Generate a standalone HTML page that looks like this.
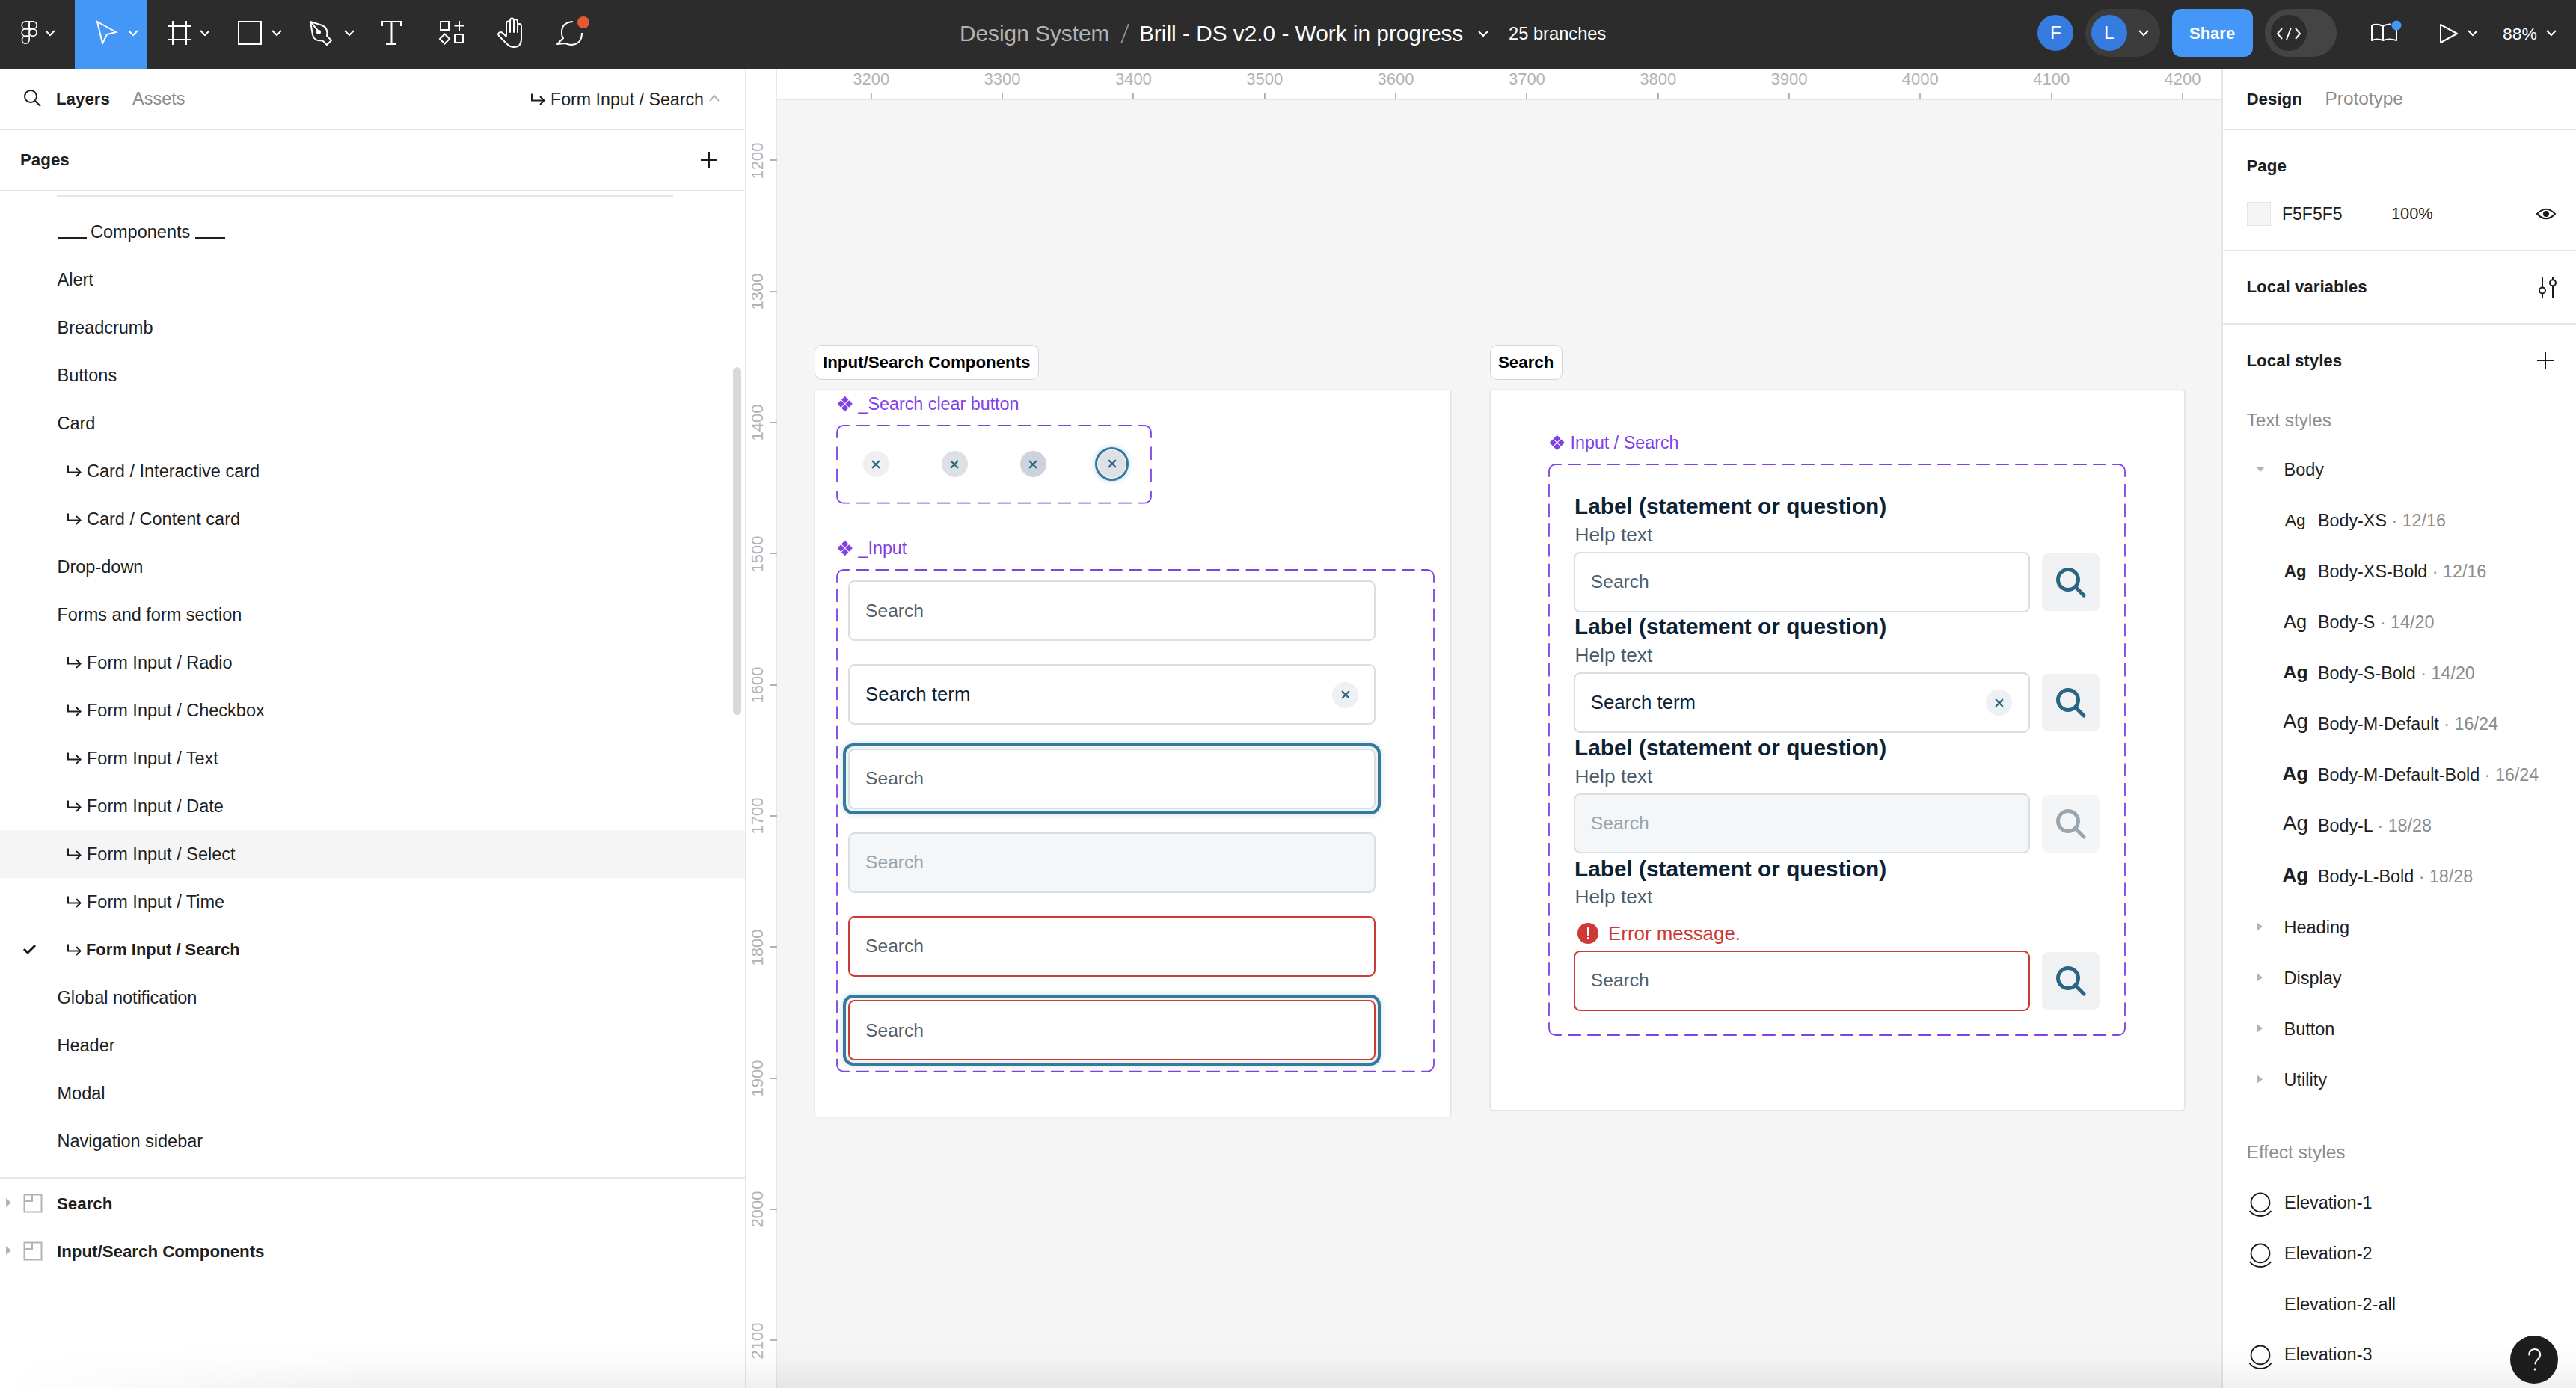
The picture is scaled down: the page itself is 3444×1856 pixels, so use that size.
<!DOCTYPE html>
<html><head><meta charset="utf-8"><style>
html,body{margin:0;padding:0;width:3444px;height:1856px;overflow:hidden;background:#fff;position:relative}
*{box-sizing:border-box}
.t{position:absolute;white-space:pre;line-height:0;font-family:"Liberation Sans",sans-serif}
.c{text-align:center}
svg{overflow:visible}
</style></head><body>
<div style="position:absolute;left:0px;top:0px;width:3444px;height:92px;background:#2c2c2c"></div>
<div style="position:absolute;left:100px;top:0px;width:96px;height:92px;background:#4597f7"></div>
<svg style="position:absolute;left:26.5px;top:28px;" width="24" height="34" viewBox="0 0 24 34" fill="none"><g stroke="#fff" stroke-width="1.8" transform="translate(1,0) scale(0.93)">
<path d="M12 1 H6.5 A5.25 5.25 0 0 0 6.5 11.5 H12 Z"/>
<path d="M12 1 H17.5 A5.25 5.25 0 0 1 17.5 11.5 H12 Z"/>
<path d="M12 11.5 H6.5 A5.25 5.25 0 0 0 6.5 22 H12 Z"/>
<circle cx="17.25" cy="16.75" r="5.25"/>
<path d="M12 22 H6.5 A5.25 5.25 0 1 0 12 27.25 Z"/>
</g></svg>
<svg style="position:absolute;left:60px;top:40px;" width="14" height="8" viewBox="0 0 14 8" fill="none"><path d="M1 1 L7 7 L13 1" stroke="#ffffff" stroke-width="2"/></svg>
<svg style="position:absolute;left:126px;top:26px;" width="34" height="36" viewBox="0 0 34 36" fill="none"><path d="M4 3 L29 17 L17 20 L11 32 Z" stroke="#fff" stroke-width="2" stroke-linejoin="miter"/></svg>
<svg style="position:absolute;left:171px;top:40px;" width="14" height="8" viewBox="0 0 14 8" fill="none"><path d="M1 1 L7 7 L13 1" stroke="#ffffff" stroke-width="2"/></svg>
<svg style="position:absolute;left:222px;top:26px;" width="36" height="36" viewBox="0 0 36 36" fill="none"><g stroke="#fff" stroke-width="2"><path d="M9 2 V34 M27 2 V34 M2 9 H34 M2 27 H34"/></g></svg>
<svg style="position:absolute;left:267px;top:40px;" width="14" height="8" viewBox="0 0 14 8" fill="none"><path d="M1 1 L7 7 L13 1" stroke="#ffffff" stroke-width="2"/></svg>
<svg style="position:absolute;left:316px;top:26px;" width="36" height="36" viewBox="0 0 36 36" fill="none"><rect x="3" y="3" width="30" height="30" stroke="#fff" stroke-width="2"/></svg>
<svg style="position:absolute;left:363px;top:40px;" width="14" height="8" viewBox="0 0 14 8" fill="none"><path d="M1 1 L7 7 L13 1" stroke="#ffffff" stroke-width="2"/></svg>
<svg style="position:absolute;left:412px;top:26px;" width="36" height="36" viewBox="0 0 36 36" fill="none"><g stroke="#fff" stroke-width="2" stroke-linejoin="round"><path d="M3 3 L19 8 Q27 12 25 22 L31 28 L25 34 L19 28 Q9 30 6 21 Z"/><path d="M3 3 L13 15"/></g><circle cx="14" cy="17" r="3" fill="#fff"/></svg>
<svg style="position:absolute;left:460px;top:40px;" width="14" height="8" viewBox="0 0 14 8" fill="none"><path d="M1 1 L7 7 L13 1" stroke="#ffffff" stroke-width="2"/></svg>
<svg style="position:absolute;left:508px;top:26px;" width="30" height="36" viewBox="0 0 30 36" fill="none"><g fill="#fff"><rect x="2" y="2" width="27" height="2"/><rect x="2" y="2" width="2" height="7"/><rect x="27" y="2" width="2" height="7"/><rect x="14.5" y="2" width="2" height="32"/><rect x="8" y="32" width="14" height="2"/></g></svg>
<svg style="position:absolute;left:586px;top:26px;" width="36" height="36" viewBox="0 0 36 36" fill="none"><g stroke="#fff" stroke-width="2"><rect x="3" y="3" width="11" height="11"/><path d="M28 2 V15 M21.5 8.5 H34.5"/><path d="M8.5 19.5 L15 26 L8.5 32.5 L2 26 Z"/><rect x="22" y="20" width="11" height="11"/></g></svg>
<svg style="position:absolute;left:663px;top:22px;" width="40" height="44" viewBox="0 0 40 44" fill="none"><path d="M14 25 V10 Q14 6.5 16.5 6.5 Q19 6.5 19 10 V21 M19 21 V6 Q19 2.5 21.5 2.5 Q24 2.5 24 6 V21 M24 21 V7 Q24 4 26.5 4 Q29 4 29 7 V21 M29 21 V13 Q29 10 31.5 10 Q34 10 34 13 V30 Q34 41 24 41 Q19 41 15 37 L4 26 Q2 23 4.5 21.5 Q7 20 10 23 L14 27" stroke="#fff" stroke-width="2" stroke-linejoin="round" stroke-linecap="round"/></svg>
<svg style="position:absolute;left:742px;top:22px;" width="48" height="44" viewBox="0 0 48 44" fill="none"><path d="M24 7 Q8 8 9 23 Q9 27 11 29 L3 37 L14 36 Q18 38 22 38 Q36 37 36 22" stroke="#fff" stroke-width="2" stroke-linejoin="round"/><circle cx="38" cy="8" r="8" fill="#e35a33"/></svg>
<div class="t" style="left:1283.0px;top:44.7px;font-size:29.8px;color:#b3b3b3;">Design System</div>
<svg style="position:absolute;left:1496px;top:31px;" width="16" height="28" viewBox="0 0 16 28" fill="none"><path d="M13 1 L3 27" stroke="#8c8c8c" stroke-width="2"/></svg>
<div class="t" style="left:1523.0px;top:44.7px;font-size:29.8px;color:#fff;">Brill - DS v2.0 - Work in progress</div>
<svg style="position:absolute;left:1975px;top:40px;" width="16" height="10" viewBox="0 0 16 10" fill="none"><path d="M2 2 L8 8 L14 2" stroke="#fff" stroke-width="2"/></svg>
<div class="t" style="left:2017.0px;top:44.8px;font-size:23.7px;color:#fff;">25 branches</div>
<div style="position:absolute;left:2724px;top:20px;width:48px;height:48px;background:#367bdf;border-radius:50%"></div>
<div class="t" style="left:2741.0px;top:43.5px;font-size:24.5px;color:#fff;">F</div>
<div style="position:absolute;left:2788px;top:12px;width:100px;height:64px;background:#3c3c3c;border-radius:32px"></div>
<div style="position:absolute;left:2796px;top:20px;width:48px;height:48px;background:#367bdf;border-radius:50%"></div>
<div class="t" style="left:2813.0px;top:43.5px;font-size:24.5px;color:#fff;">L</div>
<svg style="position:absolute;left:2859px;top:40px;" width="14" height="8" viewBox="0 0 14 8" fill="none"><path d="M1 1 L7 7 L13 1" stroke="#ffffff" stroke-width="2"/></svg>
<div style="position:absolute;left:2904px;top:12px;width:108px;height:64px;background:#4597f7;border-radius:12px"></div>
<div class="t" style="left:2927.0px;top:44.9px;font-size:22px;font-weight:700;color:#fff;">Share</div>
<div style="position:absolute;left:3028px;top:12px;width:96px;height:64px;background:#444444;border-radius:32px"></div>
<div style="position:absolute;left:3036px;top:20px;width:48px;height:48px;background:#2c2c2c;border-radius:50%"></div>
<svg style="position:absolute;left:3043px;top:36px;" width="34" height="18" viewBox="0 0 34 18" fill="none"><g stroke="#fff" stroke-width="2"><path d="M8 2 L2 9 L8 16"/><path d="M26 2 L32 9 L26 16"/><path d="M20 1 L14 17"/></g></svg>
<svg style="position:absolute;left:3168px;top:28px;" width="42" height="30" viewBox="0 0 42 30" fill="none"><g stroke="#fff" stroke-width="2" stroke-linejoin="round"><path d="M3 6 Q10 3 18 7 V26 Q10 23 3 26 Z"/><path d="M18 7 Q23 4 28 4.5 M36 12 V26 Q26 23 18 26"/></g><circle cx="36" cy="6" r="6.5" fill="#4597f7"/></svg>
<svg style="position:absolute;left:3260px;top:30px;" width="28" height="30" viewBox="0 0 28 30" fill="none"><path d="M3 3 L25 15 L3 27 Z" stroke="#fff" stroke-width="2" stroke-linejoin="round"/></svg>
<svg style="position:absolute;left:3299px;top:40px;" width="14" height="8" viewBox="0 0 14 8" fill="none"><path d="M1 1 L7 7 L13 1" stroke="#ffffff" stroke-width="2"/></svg>
<div class="t" style="left:3346.0px;top:44.6px;font-size:22.9px;color:#fff;">88%</div>
<svg style="position:absolute;left:3404px;top:40px;" width="14" height="8" viewBox="0 0 14 8" fill="none"><path d="M1 1 L7 7 L13 1" stroke="#ffffff" stroke-width="2"/></svg>
<div style="position:absolute;left:0px;top:92px;width:996px;height:1764px;background:#fff"></div>
<div style="position:absolute;left:996px;top:92px;width:2px;height:1764px;background:#e6e6e6"></div>
<svg style="position:absolute;left:30px;top:118px;" width="28" height="28" viewBox="0 0 28 28" fill="none"><circle cx="11" cy="11" r="8" stroke="#1a1a1a" stroke-width="2"/><path d="M17 17 L24 24" stroke="#1a1a1a" stroke-width="2"/></svg>
<div class="t" style="left:75.0px;top:132.8px;font-size:22.3px;font-weight:700;color:#1e1e1e;">Layers</div>
<div class="t" style="left:177.0px;top:132.4px;font-size:23.5px;color:#8c8c8c;">Assets</div>
<svg style="position:absolute;left:708.5px;top:123.5px" width="22" height="18" viewBox="0 0 22 18" fill="none"><path d="M2 1.5 V10.5 H18" stroke="#1e1e1e" stroke-width="2"/><path d="M13 5 L18.5 10.5 L13 16" stroke="#1e1e1e" stroke-width="2"/></svg>
<div class="t" style="left:736.0px;top:132.5px;font-size:23.2px;color:#1e1e1e;">Form Input / Search</div>
<svg style="position:absolute;left:947px;top:125px;" width="18" height="12" viewBox="0 0 18 12" fill="none"><path d="M2 10 L8 3 L14 10" stroke="#b3b3b3" stroke-width="2"/></svg>
<div style="position:absolute;left:0px;top:172px;width:996px;height:2px;background:#e6e6e6"></div>
<div class="t" style="left:27.0px;top:214.3px;font-size:22.3px;font-weight:700;color:#1e1e1e;">Pages</div>
<svg style="position:absolute;left:936px;top:202px;" width="24" height="24" viewBox="0 0 24 24" fill="none"><path d="M12 1 V23 M1 12 H23" stroke="#1a1a1a" stroke-width="2"/></svg>
<div style="position:absolute;left:0px;top:254px;width:996px;height:2px;background:#e6e6e6"></div>
<div style="position:absolute;left:76px;top:261px;width:824px;height:2px;background:#e6e6e6"></div>
<div style="position:absolute;left:76.5px;top:317px;width:39.5px;height:1.8px;background:#1e1e1e"></div>
<div class="t" style="left:121.0px;top:309.9px;font-size:23.5px;color:#1e1e1e;">Components</div>
<div style="position:absolute;left:261px;top:317px;width:39.5px;height:1.8px;background:#1e1e1e"></div>
<div class="t" style="left:76.5px;top:373.9px;font-size:23.5px;color:#1e1e1e;">Alert</div>
<div class="t" style="left:76.5px;top:437.9px;font-size:23.5px;color:#1e1e1e;">Breadcrumb</div>
<div class="t" style="left:76.5px;top:501.9px;font-size:23.5px;color:#1e1e1e;">Buttons</div>
<div class="t" style="left:76.5px;top:565.9px;font-size:23.5px;color:#1e1e1e;">Card</div>
<svg style="position:absolute;left:88.7px;top:621px" width="22" height="18" viewBox="0 0 22 18" fill="none"><path d="M2 1.5 V10.5 H18" stroke="#1e1e1e" stroke-width="2"/><path d="M13 5 L18.5 10.5 L13 16" stroke="#1e1e1e" stroke-width="2"/></svg>
<div class="t" style="left:116.0px;top:629.9px;font-size:23.5px;color:#1e1e1e;">Card / Interactive card</div>
<svg style="position:absolute;left:88.7px;top:685px" width="22" height="18" viewBox="0 0 22 18" fill="none"><path d="M2 1.5 V10.5 H18" stroke="#1e1e1e" stroke-width="2"/><path d="M13 5 L18.5 10.5 L13 16" stroke="#1e1e1e" stroke-width="2"/></svg>
<div class="t" style="left:116.0px;top:693.9px;font-size:23.5px;color:#1e1e1e;">Card / Content card</div>
<div class="t" style="left:76.5px;top:757.9px;font-size:23.5px;color:#1e1e1e;">Drop-down</div>
<div class="t" style="left:76.5px;top:821.9px;font-size:23.5px;color:#1e1e1e;">Forms and form section</div>
<svg style="position:absolute;left:88.7px;top:877px" width="22" height="18" viewBox="0 0 22 18" fill="none"><path d="M2 1.5 V10.5 H18" stroke="#1e1e1e" stroke-width="2"/><path d="M13 5 L18.5 10.5 L13 16" stroke="#1e1e1e" stroke-width="2"/></svg>
<div class="t" style="left:116.0px;top:885.9px;font-size:23.5px;color:#1e1e1e;">Form Input / Radio</div>
<svg style="position:absolute;left:88.7px;top:941px" width="22" height="18" viewBox="0 0 22 18" fill="none"><path d="M2 1.5 V10.5 H18" stroke="#1e1e1e" stroke-width="2"/><path d="M13 5 L18.5 10.5 L13 16" stroke="#1e1e1e" stroke-width="2"/></svg>
<div class="t" style="left:116.0px;top:949.9px;font-size:23.5px;color:#1e1e1e;">Form Input / Checkbox</div>
<svg style="position:absolute;left:88.7px;top:1005px" width="22" height="18" viewBox="0 0 22 18" fill="none"><path d="M2 1.5 V10.5 H18" stroke="#1e1e1e" stroke-width="2"/><path d="M13 5 L18.5 10.5 L13 16" stroke="#1e1e1e" stroke-width="2"/></svg>
<div class="t" style="left:116.0px;top:1013.9px;font-size:23.5px;color:#1e1e1e;">Form Input / Text</div>
<svg style="position:absolute;left:88.7px;top:1069px" width="22" height="18" viewBox="0 0 22 18" fill="none"><path d="M2 1.5 V10.5 H18" stroke="#1e1e1e" stroke-width="2"/><path d="M13 5 L18.5 10.5 L13 16" stroke="#1e1e1e" stroke-width="2"/></svg>
<div class="t" style="left:116.0px;top:1077.9px;font-size:23.5px;color:#1e1e1e;">Form Input / Date</div>
<div style="position:absolute;left:0px;top:1110px;width:996px;height:64px;background:#f5f5f5"></div>
<svg style="position:absolute;left:88.7px;top:1133px" width="22" height="18" viewBox="0 0 22 18" fill="none"><path d="M2 1.5 V10.5 H18" stroke="#1e1e1e" stroke-width="2"/><path d="M13 5 L18.5 10.5 L13 16" stroke="#1e1e1e" stroke-width="2"/></svg>
<div class="t" style="left:116.0px;top:1141.9px;font-size:23.5px;color:#1e1e1e;">Form Input / Select</div>
<svg style="position:absolute;left:88.7px;top:1197px" width="22" height="18" viewBox="0 0 22 18" fill="none"><path d="M2 1.5 V10.5 H18" stroke="#1e1e1e" stroke-width="2"/><path d="M13 5 L18.5 10.5 L13 16" stroke="#1e1e1e" stroke-width="2"/></svg>
<div class="t" style="left:116.0px;top:1205.9px;font-size:23.5px;color:#1e1e1e;">Form Input / Time</div>
<svg style="position:absolute;left:88.7px;top:1261px" width="22" height="18" viewBox="0 0 22 18" fill="none"><path d="M2 1.5 V10.5 H18" stroke="#1e1e1e" stroke-width="2"/><path d="M13 5 L18.5 10.5 L13 16" stroke="#1e1e1e" stroke-width="2"/></svg>
<div class="t" style="left:115.0px;top:1270.4px;font-size:21.9px;font-weight:700;color:#1e1e1e;">Form Input / Search</div>
<svg style="position:absolute;left:30px;top:1262px;" width="20" height="16" viewBox="0 0 20 16" fill="none"><path d="M2 7 L7 12 L17 2" stroke="#1a1a1a" stroke-width="3"/></svg>
<div class="t" style="left:76.5px;top:1333.9px;font-size:23.5px;color:#1e1e1e;">Global notification</div>
<div class="t" style="left:76.5px;top:1397.9px;font-size:23.5px;color:#1e1e1e;">Header</div>
<div class="t" style="left:76.5px;top:1461.9px;font-size:23.5px;color:#1e1e1e;">Modal</div>
<div class="t" style="left:76.5px;top:1525.9px;font-size:23.5px;color:#1e1e1e;">Navigation sidebar</div>
<div style="position:absolute;left:980px;top:491px;width:11px;height:465px;background:#d9d9d9;border-radius:6px"></div>
<div style="position:absolute;left:0px;top:1574px;width:996px;height:2px;background:#e6e6e6"></div>
<svg style="position:absolute;left:6px;top:1600px;" width="12" height="16" viewBox="0 0 12 16" fill="none"><path d="M2 2 L9 8 L2 14 Z" fill="#b3b3b3"/></svg>
<svg style="position:absolute;left:31px;top:1596px;" width="26" height="26" viewBox="0 0 26 26" fill="none"><g stroke="#b3b3b3" stroke-width="2"><rect x="1.5" y="1.5" width="23" height="23"/><path d="M12 1.5 V10 H1.5"/></g></svg>
<div class="t" style="left:76.0px;top:1610.3px;font-size:22.3px;font-weight:700;color:#1e1e1e;">Search</div>
<svg style="position:absolute;left:6px;top:1664px;" width="12" height="16" viewBox="0 0 12 16" fill="none"><path d="M2 2 L9 8 L2 14 Z" fill="#b3b3b3"/></svg>
<svg style="position:absolute;left:31px;top:1660px;" width="26" height="26" viewBox="0 0 26 26" fill="none"><g stroke="#b3b3b3" stroke-width="2"><rect x="1.5" y="1.5" width="23" height="23"/><path d="M12 1.5 V10 H1.5"/></g></svg>
<div class="t" style="left:76.0px;top:1674.3px;font-size:22.3px;font-weight:700;color:#1e1e1e;">Input/Search Components</div>
<div style="position:absolute;left:998px;top:92px;width:1973px;height:41px;background:#fff"></div>
<div style="position:absolute;left:998px;top:132px;width:1973px;height:2px;background:#e6e6e6"></div>
<div style="position:absolute;left:998px;top:133px;width:41px;height:1723px;background:#fff"></div>
<div style="position:absolute;left:1037px;top:92px;width:2px;height:1764px;background:#e6e6e6"></div>
<div style="position:absolute;left:1039px;top:134px;width:1932px;height:1722px;background:#f5f5f5"></div>
<div style="position:absolute;left:1164px;top:124px;width:2px;height:9px;background:#b3b3b3"></div>
<div class="t c" style="left:1104.7px;top:106.4px;width:120px;font-size:22px;color:#b3b3b3">3200</div>
<div style="position:absolute;left:1339px;top:124px;width:2px;height:9px;background:#b3b3b3"></div>
<div class="t c" style="left:1280.0px;top:106.4px;width:120px;font-size:22px;color:#b3b3b3">3300</div>
<div style="position:absolute;left:1514px;top:124px;width:2px;height:9px;background:#b3b3b3"></div>
<div class="t c" style="left:1455.4px;top:106.4px;width:120px;font-size:22px;color:#b3b3b3">3400</div>
<div style="position:absolute;left:1690px;top:124px;width:2px;height:9px;background:#b3b3b3"></div>
<div class="t c" style="left:1630.7px;top:106.4px;width:120px;font-size:22px;color:#b3b3b3">3500</div>
<div style="position:absolute;left:1865px;top:124px;width:2px;height:9px;background:#b3b3b3"></div>
<div class="t c" style="left:1806.0px;top:106.4px;width:120px;font-size:22px;color:#b3b3b3">3600</div>
<div style="position:absolute;left:2040px;top:124px;width:2px;height:9px;background:#b3b3b3"></div>
<div class="t c" style="left:1981.4px;top:106.4px;width:120px;font-size:22px;color:#b3b3b3">3700</div>
<div style="position:absolute;left:2216px;top:124px;width:2px;height:9px;background:#b3b3b3"></div>
<div class="t c" style="left:2156.7px;top:106.4px;width:120px;font-size:22px;color:#b3b3b3">3800</div>
<div style="position:absolute;left:2391px;top:124px;width:2px;height:9px;background:#b3b3b3"></div>
<div class="t c" style="left:2332.0px;top:106.4px;width:120px;font-size:22px;color:#b3b3b3">3900</div>
<div style="position:absolute;left:2566px;top:124px;width:2px;height:9px;background:#b3b3b3"></div>
<div class="t c" style="left:2507.3px;top:106.4px;width:120px;font-size:22px;color:#b3b3b3">4000</div>
<div style="position:absolute;left:2742px;top:124px;width:2px;height:9px;background:#b3b3b3"></div>
<div class="t c" style="left:2682.7px;top:106.4px;width:120px;font-size:22px;color:#b3b3b3">4100</div>
<div style="position:absolute;left:2917px;top:124px;width:2px;height:9px;background:#b3b3b3"></div>
<div class="t c" style="left:2858.0px;top:106.4px;width:120px;font-size:22px;color:#b3b3b3">4200</div>
<div style="position:absolute;left:1030px;top:213px;width:9px;height:2px;background:#b3b3b3"></div>
<div class="t c" style="left:953px;top:214.5px;width:120px;font-size:22px;color:#b3b3b3;transform:rotate(-90deg);transform-origin:60px 0px">1200</div>
<div style="position:absolute;left:1030px;top:389px;width:9px;height:2px;background:#b3b3b3"></div>
<div class="t c" style="left:953px;top:389.8px;width:120px;font-size:22px;color:#b3b3b3;transform:rotate(-90deg);transform-origin:60px 0px">1300</div>
<div style="position:absolute;left:1030px;top:564px;width:9px;height:2px;background:#b3b3b3"></div>
<div class="t c" style="left:953px;top:565.2px;width:120px;font-size:22px;color:#b3b3b3;transform:rotate(-90deg);transform-origin:60px 0px">1400</div>
<div style="position:absolute;left:1030px;top:739px;width:9px;height:2px;background:#b3b3b3"></div>
<div class="t c" style="left:953px;top:740.5px;width:120px;font-size:22px;color:#b3b3b3;transform:rotate(-90deg);transform-origin:60px 0px">1500</div>
<div style="position:absolute;left:1030px;top:915px;width:9px;height:2px;background:#b3b3b3"></div>
<div class="t c" style="left:953px;top:915.8px;width:120px;font-size:22px;color:#b3b3b3;transform:rotate(-90deg);transform-origin:60px 0px">1600</div>
<div style="position:absolute;left:1030px;top:1090px;width:9px;height:2px;background:#b3b3b3"></div>
<div class="t c" style="left:953px;top:1091.2px;width:120px;font-size:22px;color:#b3b3b3;transform:rotate(-90deg);transform-origin:60px 0px">1700</div>
<div style="position:absolute;left:1030px;top:1265px;width:9px;height:2px;background:#b3b3b3"></div>
<div class="t c" style="left:953px;top:1266.5px;width:120px;font-size:22px;color:#b3b3b3;transform:rotate(-90deg);transform-origin:60px 0px">1800</div>
<div style="position:absolute;left:1030px;top:1441px;width:9px;height:2px;background:#b3b3b3"></div>
<div class="t c" style="left:953px;top:1441.8px;width:120px;font-size:22px;color:#b3b3b3;transform:rotate(-90deg);transform-origin:60px 0px">1900</div>
<div style="position:absolute;left:1030px;top:1616px;width:9px;height:2px;background:#b3b3b3"></div>
<div class="t c" style="left:953px;top:1617.1px;width:120px;font-size:22px;color:#b3b3b3;transform:rotate(-90deg);transform-origin:60px 0px">2000</div>
<div style="position:absolute;left:1030px;top:1791px;width:9px;height:2px;background:#b3b3b3"></div>
<div class="t c" style="left:953px;top:1792.5px;width:120px;font-size:22px;color:#b3b3b3;transform:rotate(-90deg);transform-origin:60px 0px">2100</div>
<div style="position:absolute;left:1089px;top:461px;width:300px;height:47px;background:#fff;border:1.5px solid #d4d4d4;border-radius:10px"></div>
<div class="t" style="left:1100.0px;top:485.3px;font-size:22.3px;font-weight:700;color:#000;">Input/Search Components</div>
<div style="position:absolute;left:1992px;top:461px;width:97px;height:47px;background:#fff;border:1.5px solid #d4d4d4;border-radius:10px"></div>
<div class="t" style="left:2003.0px;top:485.3px;font-size:22.3px;font-weight:700;color:#000;">Search</div>
<div style="position:absolute;left:1090px;top:521.5px;width:849px;height:971px;background:#fff;box-shadow:0 0 0 1.5px #e3e3e3;border-radius:3px"></div>
<div style="position:absolute;left:1992.5px;top:521.5px;width:927px;height:962px;background:#fff;box-shadow:0 0 0 1.5px #e3e3e3;border-radius:3px"></div>
<svg style="position:absolute;left:1118.8px;top:529px;" width="22" height="22" viewBox="0 0 22 22" fill="none"><g fill="#8041e6"><path d="M10.7 0.7999999999999998 L15.45 5.55 L10.7 10.3 L5.949999999999999 5.55 Z"/><path d="M10.7 11.7 L15.45 16.45 L10.7 21.2 L5.949999999999999 16.45 Z"/><path d="M5.249999999999999 6.25 L10.0 11 L5.249999999999999 15.75 L0.4999999999999991 11 Z"/><path d="M16.15 6.25 L20.9 11 L16.15 15.75 L11.399999999999999 11 Z"/></g></svg>
<div class="t" style="left:1147.5px;top:539.9px;font-size:23.3px;color:#8041e6;">_Search clear button</div>
<svg style="position:absolute;left:1115px;top:564.6px;" width="428" height="111.69999999999993" viewBox="0 0 428 111.69999999999993" fill="none"><path d="M30.18 4.00L47.73 4.00M57.11 4.00L74.66 4.00M84.04 4.00L101.59 4.00M110.97 4.00L128.52 4.00M137.90 4.00L155.45 4.00M164.83 4.00L182.38 4.00M191.76 4.00L209.31 4.00M218.69 4.00L236.24 4.00M245.62 4.00L263.17 4.00M272.55 4.00L290.10 4.00M299.48 4.00L317.03 4.00M326.41 4.00L343.96 4.00M353.34 4.00L370.89 4.00M380.27 4.00L397.82 4.00M424.00 32.47L424.00 50.02M424.00 61.68L424.00 79.23M397.82 107.70L380.27 107.70M370.89 107.70L353.34 107.70M343.96 107.70L326.41 107.70M317.03 107.70L299.48 107.70M290.10 107.70L272.55 107.70M263.17 107.70L245.62 107.70M236.24 107.70L218.69 107.70M209.31 107.70L191.76 107.70M182.38 107.70L164.83 107.70M155.45 107.70L137.90 107.70M128.52 107.70L110.97 107.70M101.59 107.70L84.04 107.70M74.66 107.70L57.11 107.70M47.73 107.70L30.18 107.70M4.00 79.23L4.00 61.68M4.00 50.02L4.00 32.47M4.00 20.80L4.00 12.80A8.8 8.8 0 0 1 12.80 4.00L20.80 4.00M407.20 4.00L415.20 4.00A8.8 8.8 0 0 1 424.00 12.80L424.00 20.80M424.00 90.90L424.00 98.90A8.8 8.8 0 0 1 415.20 107.70L407.20 107.70M20.80 107.70L12.80 107.70A8.8 8.8 0 0 1 4.00 98.90L4.00 90.90" stroke="#8041e6" stroke-width="1.8"/></svg>
<div style="position:absolute;left:1153.5px;top:603.0px;width:35px;height:35px;background:#eef0f2;border-radius:50%"></div>
<svg style="position:absolute;left:1164px;top:613.5px;" width="14" height="14" viewBox="0 0 14 14" fill="none"><path d="M2.75 2.75 L11.25 11.25 M11.25 2.75 L2.75 11.25" stroke="#2a6584" stroke-width="2.3" stroke-linecap="round"/></svg>
<div style="position:absolute;left:1258.5px;top:603.0px;width:35px;height:35px;background:#dde1e5;border-radius:50%"></div>
<svg style="position:absolute;left:1269px;top:613.5px;" width="14" height="14" viewBox="0 0 14 14" fill="none"><path d="M2.75 2.75 L11.25 11.25 M11.25 2.75 L2.75 11.25" stroke="#2a6584" stroke-width="2.3" stroke-linecap="round"/></svg>
<div style="position:absolute;left:1363.8px;top:603.0px;width:35px;height:35px;background:#cdd3da;border-radius:50%"></div>
<svg style="position:absolute;left:1374.3px;top:613.5px;" width="14" height="14" viewBox="0 0 14 14" fill="none"><path d="M2.75 2.75 L11.25 11.25 M11.25 2.75 L2.75 11.25" stroke="#2a6584" stroke-width="2.3" stroke-linecap="round"/></svg>
<div style="position:absolute;left:1463.9px;top:597.6px;width:45.6px;height:45.6px;border:3.5px solid #35799c;border-radius:50%;background:#fff;box-shadow:0 0 7px rgba(50,120,154,0.35)"></div>
<div style="position:absolute;left:1468.3px;top:602.0px;width:36.8px;height:36.8px;background:#dde1e5;border-radius:50%"></div>
<svg style="position:absolute;left:1479.7px;top:613.4px;" width="14" height="14" viewBox="0 0 14 14" fill="none"><path d="M2.75 2.75 L11.25 11.25 M11.25 2.75 L2.75 11.25" stroke="#2a6584" stroke-width="2.3" stroke-linecap="round"/></svg>
<svg style="position:absolute;left:1118.8px;top:722px;" width="22" height="22" viewBox="0 0 22 22" fill="none"><g fill="#8041e6"><path d="M10.7 0.7999999999999998 L15.45 5.55 L10.7 10.3 L5.949999999999999 5.55 Z"/><path d="M10.7 11.7 L15.45 16.45 L10.7 21.2 L5.949999999999999 16.45 Z"/><path d="M5.249999999999999 6.25 L10.0 11 L5.249999999999999 15.75 L0.4999999999999991 11 Z"/><path d="M16.15 6.25 L20.9 11 L16.15 15.75 L11.399999999999999 11 Z"/></g></svg>
<div class="t" style="left:1147.5px;top:732.9px;font-size:23.3px;color:#8041e6;">_Input</div>
<svg style="position:absolute;left:1115px;top:758px;" width="806" height="678.5999999999999" viewBox="0 0 806 678.5999999999999" fill="none"><path d="M29.32 4.00L46.87 4.00M55.38 4.00L72.93 4.00M81.44 4.00L98.99 4.00M107.51 4.00L125.06 4.00M133.58 4.00L151.12 4.00M159.64 4.00L177.19 4.00M185.70 4.00L203.26 4.00M211.77 4.00L229.32 4.00M237.84 4.00L255.38 4.00M263.90 4.00L281.45 4.00M289.97 4.00L307.52 4.00M316.03 4.00L333.58 4.00M342.10 4.00L359.64 4.00M368.16 4.00L385.71 4.00M394.22 4.00L411.78 4.00M420.29 4.00L437.84 4.00M446.36 4.00L463.90 4.00M472.42 4.00L489.97 4.00M498.49 4.00L516.04 4.00M524.55 4.00L542.10 4.00M550.62 4.00L568.16 4.00M576.68 4.00L594.23 4.00M602.74 4.00L620.29 4.00M628.81 4.00L646.36 4.00M654.87 4.00L672.42 4.00M680.94 4.00L698.49 4.00M707.00 4.00L724.55 4.00M733.07 4.00L750.62 4.00M759.13 4.00L776.68 4.00M802.00 29.43L802.00 46.98M802.00 55.61L802.00 73.16M802.00 81.80L802.00 99.35M802.00 107.98L802.00 125.53M802.00 134.16L802.00 151.71M802.00 160.34L802.00 177.89M802.00 186.52L802.00 204.07M802.00 212.71L802.00 230.26M802.00 238.89L802.00 256.44M802.00 265.07L802.00 282.62M802.00 291.25L802.00 308.80M802.00 317.43L802.00 334.98M802.00 343.62L802.00 361.17M802.00 369.80L802.00 387.35M802.00 395.98L802.00 413.53M802.00 422.16L802.00 439.71M802.00 448.34L802.00 465.89M802.00 474.53L802.00 492.08M802.00 500.71L802.00 518.26M802.00 526.89L802.00 544.44M802.00 553.07L802.00 570.62M802.00 579.25L802.00 596.80M802.00 605.44L802.00 622.99M802.00 631.62L802.00 649.17M776.68 674.60L759.13 674.60M750.62 674.60L733.07 674.60M724.56 674.60L707.01 674.60M698.49 674.60L680.94 674.60M672.42 674.60L654.88 674.60M646.36 674.60L628.81 674.60M620.30 674.60L602.74 674.60M594.23 674.60L576.68 674.60M568.16 674.60L550.62 674.60M542.10 674.60L524.55 674.60M516.03 674.60L498.48 674.60M489.97 674.60L472.42 674.60M463.90 674.60L446.36 674.60M437.84 674.60L420.29 674.60M411.78 674.60L394.22 674.60M385.71 674.60L368.16 674.60M359.64 674.60L342.10 674.60M333.58 674.60L316.03 674.60M307.51 674.60L289.96 674.60M281.45 674.60L263.90 674.60M255.38 674.60L237.84 674.60M229.32 674.60L211.77 674.60M203.26 674.60L185.71 674.60M177.19 674.60L159.64 674.60M151.13 674.60L133.58 674.60M125.06 674.60L107.51 674.60M99.00 674.60L81.45 674.60M72.93 674.60L55.38 674.60M46.87 674.60L29.32 674.60M4.00 649.17L4.00 631.62M4.00 622.99L4.00 605.44M4.00 596.80L4.00 579.25M4.00 570.62L4.00 553.07M4.00 544.44L4.00 526.89M4.00 518.26L4.00 500.71M4.00 492.08L4.00 474.53M4.00 465.89L4.00 448.34M4.00 439.71L4.00 422.16M4.00 413.53L4.00 395.98M4.00 387.35L4.00 369.80M4.00 361.17L4.00 343.62M4.00 334.98L4.00 317.43M4.00 308.80L4.00 291.25M4.00 282.62L4.00 265.07M4.00 256.44L4.00 238.89M4.00 230.26L4.00 212.71M4.00 204.07L4.00 186.52M4.00 177.89L4.00 160.34M4.00 151.71L4.00 134.16M4.00 125.53L4.00 107.98M4.00 99.35L4.00 81.80M4.00 73.16L4.00 55.61M4.00 46.98L4.00 29.43M4.00 20.80L4.00 12.80A8.8 8.8 0 0 1 12.80 4.00L20.80 4.00M785.20 4.00L793.20 4.00A8.8 8.8 0 0 1 802.00 12.80L802.00 20.80M802.00 657.80L802.00 665.80A8.8 8.8 0 0 1 793.20 674.60L785.20 674.60M20.80 674.60L12.80 674.60A8.8 8.8 0 0 1 4.00 665.80L4.00 657.80" stroke="#8041e6" stroke-width="1.8"/></svg>
<div style="position:absolute;left:1133.8px;top:776.4px;width:705.6px;height:80.7px;background:#fff;border:2.2px solid #d9dee3;border-radius:8.5px"></div>
<div class="t" style="left:1157.1px;top:816.8px;font-size:24.6px;color:#52606d;">Search</div>
<div style="position:absolute;left:1133.8px;top:888.4px;width:705.6px;height:80.7px;background:#fff;border:2.2px solid #d9dee3;border-radius:8.5px"></div>
<div class="t" style="left:1157.1px;top:928.4px;font-size:25.75px;color:#0c2234;">Search term</div>
<div style="position:absolute;left:1781.1px;top:911.5px;width:35px;height:35px;background:#eef0f2;border-radius:50%"></div>
<svg style="position:absolute;left:1791.6px;top:922px;" width="14" height="14" viewBox="0 0 14 14" fill="none"><path d="M2.75 2.75 L11.25 11.25 M11.25 2.75 L2.75 11.25" stroke="#2a6584" stroke-width="2.3" stroke-linecap="round"/></svg>
<div style="position:absolute;left:1127.1px;top:993.8px;width:719.0px;height:94.9px;border:4px solid #35799c;border-radius:14px;background:#eef3f6;box-shadow:0 0 8px rgba(50,120,154,0.25)"></div>
<div style="position:absolute;left:1133.8px;top:1000.9px;width:705.6px;height:80.7px;background:#fff;border:2.2px solid #d9dee3;border-radius:8.5px"></div>
<div class="t" style="left:1157.1px;top:1041.3px;font-size:24.6px;color:#52606d;">Search</div>
<div style="position:absolute;left:1133.8px;top:1113.0px;width:705.6px;height:80.7px;background:#f4f6f8;border:2.2px solid #d9dee3;border-radius:8.5px"></div>
<div class="t" style="left:1157.1px;top:1153.4px;font-size:24.6px;color:#98a4ae;">Search</div>
<div style="position:absolute;left:1133.8px;top:1225.0px;width:705.6px;height:80.7px;background:#fff;border:2.2px solid #cd3a36;border-radius:8.5px"></div>
<div class="t" style="left:1157.1px;top:1265.4px;font-size:24.6px;color:#52606d;">Search</div>
<div style="position:absolute;left:1127.1px;top:1330.3px;width:719.0px;height:94.9px;border:4px solid #35799c;border-radius:14px;background:#eef3f6;box-shadow:0 0 8px rgba(50,120,154,0.25)"></div>
<div style="position:absolute;left:1133.8px;top:1337.4px;width:705.6px;height:80.7px;background:#fff;border:2.2px solid #cd3a36;border-radius:8.5px"></div>
<div class="t" style="left:1157.1px;top:1377.8px;font-size:24.6px;color:#52606d;">Search</div>
<svg style="position:absolute;left:2070.8px;top:581px;" width="22" height="22" viewBox="0 0 22 22" fill="none"><g fill="#8041e6"><path d="M10.7 0.7999999999999998 L15.45 5.55 L10.7 10.3 L5.949999999999999 5.55 Z"/><path d="M10.7 11.7 L15.45 16.45 L10.7 21.2 L5.949999999999999 16.45 Z"/><path d="M5.249999999999999 6.25 L10.0 11 L5.249999999999999 15.75 L0.4999999999999991 11 Z"/><path d="M16.15 6.25 L20.9 11 L16.15 15.75 L11.399999999999999 11 Z"/></g></svg>
<div class="t" style="left:2099.5px;top:591.9px;font-size:23.3px;color:#8041e6;">Input / Search</div>
<svg style="position:absolute;left:2067px;top:617px;" width="778" height="771" viewBox="0 0 778 771" fill="none"><path d="M29.25 4.00L46.80 4.00M55.25 4.00L72.80 4.00M81.24 4.00L98.79 4.00M107.24 4.00L124.79 4.00M133.24 4.00L150.79 4.00M159.24 4.00L176.79 4.00M185.24 4.00L202.79 4.00M211.24 4.00L228.79 4.00M237.23 4.00L254.78 4.00M263.23 4.00L280.78 4.00M289.23 4.00L306.78 4.00M315.23 4.00L332.78 4.00M341.23 4.00L358.78 4.00M367.23 4.00L384.78 4.00M393.22 4.00L410.77 4.00M419.22 4.00L436.77 4.00M445.22 4.00L462.77 4.00M471.22 4.00L488.77 4.00M497.22 4.00L514.77 4.00M523.22 4.00L540.77 4.00M549.21 4.00L566.76 4.00M575.21 4.00L592.76 4.00M601.21 4.00L618.76 4.00M627.21 4.00L644.76 4.00M653.21 4.00L670.76 4.00M679.21 4.00L696.76 4.00M705.20 4.00L722.75 4.00M731.20 4.00L748.75 4.00M774.00 29.93L774.00 47.48M774.00 56.60L774.00 74.15M774.00 83.28L774.00 100.83M774.00 109.96L774.00 127.51M774.00 136.63L774.00 154.18M774.00 163.31L774.00 180.86M774.00 189.99L774.00 207.54M774.00 216.66L774.00 234.21M774.00 243.34L774.00 260.89M774.00 270.02L774.00 287.57M774.00 296.69L774.00 314.24M774.00 323.37L774.00 340.92M774.00 350.05L774.00 367.60M774.00 376.73L774.00 394.28M774.00 403.40L774.00 420.95M774.00 430.08L774.00 447.63M774.00 456.76L774.00 474.31M774.00 483.43L774.00 500.98M774.00 510.11L774.00 527.66M774.00 536.79L774.00 554.34M774.00 563.46L774.00 581.01M774.00 590.14L774.00 607.69M774.00 616.82L774.00 634.37M774.00 643.49L774.00 661.04M774.00 670.17L774.00 687.72M774.00 696.85L774.00 714.40M774.00 723.52L774.00 741.07M748.75 767.00L731.20 767.00M722.75 767.00L705.20 767.00M696.76 767.00L679.21 767.00M670.76 767.00L653.21 767.00M644.76 767.00L627.21 767.00M618.76 767.00L601.21 767.00M592.76 767.00L575.21 767.00M566.76 767.00L549.21 767.00M540.77 767.00L523.22 767.00M514.77 767.00L497.22 767.00M488.77 767.00L471.22 767.00M462.77 767.00L445.22 767.00M436.77 767.00L419.22 767.00M410.77 767.00L393.22 767.00M384.78 767.00L367.23 767.00M358.78 767.00L341.23 767.00M332.78 767.00L315.23 767.00M306.78 767.00L289.23 767.00M280.78 767.00L263.23 767.00M254.78 767.00L237.23 767.00M228.79 767.00L211.24 767.00M202.79 767.00L185.24 767.00M176.79 767.00L159.24 767.00M150.79 767.00L133.24 767.00M124.79 767.00L107.24 767.00M98.79 767.00L81.24 767.00M72.80 767.00L55.25 767.00M46.80 767.00L29.25 767.00M4.00 741.07L4.00 723.52M4.00 714.40L4.00 696.85M4.00 687.72L4.00 670.17M4.00 661.04L4.00 643.49M4.00 634.37L4.00 616.82M4.00 607.69L4.00 590.14M4.00 581.01L4.00 563.46M4.00 554.34L4.00 536.79M4.00 527.66L4.00 510.11M4.00 500.98L4.00 483.43M4.00 474.31L4.00 456.76M4.00 447.63L4.00 430.08M4.00 420.95L4.00 403.40M4.00 394.27L4.00 376.72M4.00 367.60L4.00 350.05M4.00 340.92L4.00 323.37M4.00 314.24L4.00 296.69M4.00 287.57L4.00 270.02M4.00 260.89L4.00 243.34M4.00 234.21L4.00 216.66M4.00 207.54L4.00 189.99M4.00 180.86L4.00 163.31M4.00 154.18L4.00 136.63M4.00 127.51L4.00 109.96M4.00 100.83L4.00 83.28M4.00 74.15L4.00 56.60M4.00 47.48L4.00 29.93M4.00 20.80L4.00 12.80A8.8 8.8 0 0 1 12.80 4.00L20.80 4.00M757.20 4.00L765.20 4.00A8.8 8.8 0 0 1 774.00 12.80L774.00 20.80M774.00 750.20L774.00 758.20A8.8 8.8 0 0 1 765.20 767.00L757.20 767.00M20.80 767.00L12.80 767.00A8.8 8.8 0 0 1 4.00 758.20L4.00 750.20" stroke="#8041e6" stroke-width="1.8"/></svg>
<div class="t" style="left:2105.0px;top:677.0px;font-size:29.8px;font-weight:700;color:#0c2234;">Label (statement or question)</div>
<div class="t" style="left:2105.5px;top:715.2px;font-size:26.3px;color:#4d5b69;">Help text</div>
<div style="position:absolute;left:2103.5px;top:737.9px;width:610.1px;height:80.7px;background:#fff;border:2.2px solid #d9dee3;border-radius:8.5px"></div>
<div class="t" style="left:2126.8px;top:778.3px;font-size:24.6px;color:#52606d;">Search</div>
<div style="position:absolute;left:2729.5px;top:739.7px;width:77.5px;height:77px;background:#eff1f3;border-radius:8px"></div>
<svg style="position:absolute;left:2729.5px;top:739.7px;" width="77" height="77" viewBox="0 0 77 77" fill="none"><circle cx="35" cy="35" r="13.5" stroke="#2a6584" stroke-width="5"/><path d="M45 45 L56 56" stroke="#2a6584" stroke-width="5" stroke-linecap="round"/></svg>
<div class="t" style="left:2105.0px;top:837.9px;font-size:29.8px;font-weight:700;color:#0c2234;">Label (statement or question)</div>
<div class="t" style="left:2105.5px;top:876.1px;font-size:26.3px;color:#4d5b69;">Help text</div>
<div style="position:absolute;left:2103.5px;top:898.9px;width:610.1px;height:80.7px;background:#fff;border:2.2px solid #d9dee3;border-radius:8.5px"></div>
<div class="t" style="left:2126.8px;top:938.9px;font-size:25.75px;color:#0c2234;">Search term</div>
<div style="position:absolute;left:2655.3px;top:922.0px;width:35px;height:35px;background:#eef0f2;border-radius:50%"></div>
<svg style="position:absolute;left:2665.8px;top:932.5px;" width="14" height="14" viewBox="0 0 14 14" fill="none"><path d="M2.75 2.75 L11.25 11.25 M11.25 2.75 L2.75 11.25" stroke="#2a6584" stroke-width="2.3" stroke-linecap="round"/></svg>
<div style="position:absolute;left:2729.5px;top:900.7px;width:77.5px;height:77px;background:#eff1f3;border-radius:8px"></div>
<svg style="position:absolute;left:2729.5px;top:900.7px;" width="77" height="77" viewBox="0 0 77 77" fill="none"><circle cx="35" cy="35" r="13.5" stroke="#2a6584" stroke-width="5"/><path d="M45 45 L56 56" stroke="#2a6584" stroke-width="5" stroke-linecap="round"/></svg>
<div class="t" style="left:2105.0px;top:999.7px;font-size:29.8px;font-weight:700;color:#0c2234;">Label (statement or question)</div>
<div class="t" style="left:2105.5px;top:1038.3px;font-size:26.3px;color:#4d5b69;">Help text</div>
<div style="position:absolute;left:2103.5px;top:1060.7px;width:610.1px;height:80.7px;background:#f4f6f8;border:2.2px solid #d9dee3;border-radius:8.5px"></div>
<div class="t" style="left:2126.8px;top:1101.1px;font-size:24.6px;color:#98a4ae;">Search</div>
<div style="position:absolute;left:2729.5px;top:1062.5px;width:77.5px;height:77px;background:#f4f5f7;border-radius:8px"></div>
<svg style="position:absolute;left:2729.5px;top:1062.5px;" width="77" height="77" viewBox="0 0 77 77" fill="none"><circle cx="35" cy="35" r="13.5" stroke="#9aa5ae" stroke-width="5"/><path d="M45 45 L56 56" stroke="#9aa5ae" stroke-width="5" stroke-linecap="round"/></svg>
<div class="t" style="left:2105.0px;top:1161.5px;font-size:29.8px;font-weight:700;color:#0c2234;">Label (statement or question)</div>
<div class="t" style="left:2105.5px;top:1198.7px;font-size:26.3px;color:#4d5b69;">Help text</div>
<div style="position:absolute;left:2103.5px;top:1270.9px;width:610.1px;height:80.7px;background:#fff;border:2.2px solid #cd3a36;border-radius:8.5px"></div>
<div class="t" style="left:2126.8px;top:1311.3px;font-size:24.6px;color:#52606d;">Search</div>
<div style="position:absolute;left:2729.5px;top:1272.7px;width:77.5px;height:77px;background:#eff1f3;border-radius:8px"></div>
<svg style="position:absolute;left:2729.5px;top:1272.7px;" width="77" height="77" viewBox="0 0 77 77" fill="none"><circle cx="35" cy="35" r="13.5" stroke="#2a6584" stroke-width="5"/><path d="M45 45 L56 56" stroke="#2a6584" stroke-width="5" stroke-linecap="round"/></svg>
<div style="position:absolute;left:2109px;top:1234px;width:28px;height:28px;background:#cd3a36;border-radius:50%"></div>
<div style="position:absolute;left:2121.5px;top:1240px;width:3px;height:11px;background:#fff;border-radius:1px"></div>
<div style="position:absolute;left:2121.5px;top:1253px;width:3px;height:3px;background:#fff;border-radius:1px"></div>
<div class="t" style="left:2150.0px;top:1248.3px;font-size:25.9px;color:#cd3a36;">Error message.</div>
<div style="position:absolute;left:2971px;top:92px;width:473px;height:1764px;background:#fff"></div>
<div style="position:absolute;left:2970px;top:92px;width:2px;height:1764px;background:#e6e6e6"></div>
<div class="t" style="left:3003.5px;top:132.8px;font-size:22.3px;font-weight:700;color:#1e1e1e;">Design</div>
<div class="t" style="left:3108.5px;top:132.0px;font-size:24.4px;color:#8c8c8c;">Prototype</div>
<div style="position:absolute;left:2972px;top:172px;width:472px;height:2px;background:#e6e6e6"></div>
<div class="t" style="left:3003.5px;top:222.3px;font-size:22.3px;font-weight:700;color:#1e1e1e;">Page</div>
<div style="position:absolute;left:3004px;top:270px;width:32px;height:32px;background:#f5f5f5;box-shadow:inset 0 0 0 1px #e6e6e6"></div>
<div class="t" style="left:3051.0px;top:286.0px;font-size:23px;color:#1e1e1e;">F5F5F5</div>
<div class="t" style="left:3197.0px;top:286.4px;font-size:21.8px;color:#1e1e1e;">100%</div>
<svg style="position:absolute;left:3388px;top:274px;" width="32" height="24" viewBox="0 0 32 24" fill="none"><path d="M4 12 Q16 -0.5 28 12 Q16 24.5 4 12 Z" stroke="#1a1a1a" stroke-width="2"/><circle cx="16" cy="12" r="4" fill="#1a1a1a"/></svg>
<div style="position:absolute;left:2972px;top:334px;width:472px;height:2px;background:#e6e6e6"></div>
<div class="t" style="left:3003.5px;top:384.3px;font-size:22.3px;font-weight:700;color:#1e1e1e;">Local variables</div>
<svg style="position:absolute;left:3390px;top:366px;" width="32" height="36" viewBox="0 0 32 36" fill="none"><g stroke="#1a1a1a" stroke-width="2"><path d="M9 4 V18.5 M9 26.5 V32"/><circle cx="9" cy="22.5" r="4"/><path d="M23 4 V8.2 M23 16.2 V32"/><circle cx="23" cy="12.2" r="4"/></g></svg>
<div style="position:absolute;left:2972px;top:432px;width:472px;height:2px;background:#e6e6e6"></div>
<div class="t" style="left:3003.5px;top:482.8px;font-size:22.3px;font-weight:700;color:#1e1e1e;">Local styles</div>
<svg style="position:absolute;left:3391px;top:470px;" width="24" height="24" viewBox="0 0 24 24" fill="none"><path d="M12 1 V23 M1 12 H23" stroke="#1a1a1a" stroke-width="2"/></svg>
<div class="t" style="left:3003.5px;top:561.6px;font-size:24.3px;color:#8c8c8c;">Text styles</div>
<svg style="position:absolute;left:3014px;top:622px;" width="16" height="12" viewBox="0 0 16 12" fill="none"><path d="M2 2 H14 L8 9 Z" fill="#b3b3b3"/></svg>
<div class="t" style="left:3053.5px;top:628.4px;font-size:23.5px;color:#1e1e1e;">Body</div>
<div class="t" style="left:3055.0px;top:695.9px;font-size:22.5px;color:#1e1e1e;">Ag</div>
<div class="t" style="left:3099.0px;top:695.6px;font-size:23.3px;color:#1e1e1e;">Body-XS<span style="color:#8c8c8c"> · 12/16</span></div>
<div class="t" style="left:3054.0px;top:764.0px;font-size:22.1px;font-weight:700;color:#1e1e1e;">Ag</div>
<div class="t" style="left:3099.0px;top:763.6px;font-size:23.3px;color:#1e1e1e;">Body-XS-Bold<span style="color:#8c8c8c"> · 12/16</span></div>
<div class="t" style="left:3053.0px;top:830.9px;font-size:25.4px;color:#1e1e1e;">Ag</div>
<div class="t" style="left:3099.0px;top:831.6px;font-size:23.3px;color:#1e1e1e;">Body-S<span style="color:#8c8c8c"> · 14/20</span></div>
<div class="t" style="left:3052.5px;top:899.1px;font-size:24.8px;font-weight:700;color:#1e1e1e;">Ag</div>
<div class="t" style="left:3099.0px;top:899.6px;font-size:23.3px;color:#1e1e1e;">Body-S-Bold<span style="color:#8c8c8c"> · 14/20</span></div>
<div class="t" style="left:3052.0px;top:965.1px;font-size:27.8px;color:#1e1e1e;">Ag</div>
<div class="t" style="left:3099.0px;top:967.6px;font-size:23.3px;color:#1e1e1e;">Body-M-Default<span style="color:#8c8c8c"> · 16/24</span></div>
<div class="t" style="left:3051.5px;top:1033.7px;font-size:25.9px;font-weight:700;color:#1e1e1e;">Ag</div>
<div class="t" style="left:3099.0px;top:1035.6px;font-size:23.3px;color:#1e1e1e;">Body-M-Default-Bold<span style="color:#8c8c8c"> · 16/24</span></div>
<div class="t" style="left:3052.0px;top:1101.1px;font-size:27.8px;color:#1e1e1e;">Ag</div>
<div class="t" style="left:3099.0px;top:1103.6px;font-size:23.3px;color:#1e1e1e;">Body-L<span style="color:#8c8c8c"> · 18/28</span></div>
<div class="t" style="left:3051.5px;top:1169.7px;font-size:25.9px;font-weight:700;color:#1e1e1e;">Ag</div>
<div class="t" style="left:3099.0px;top:1171.6px;font-size:23.3px;color:#1e1e1e;">Body-L-Bold<span style="color:#8c8c8c"> · 18/28</span></div>
<svg style="position:absolute;left:3014px;top:1230.7px;" width="14" height="16" viewBox="0 0 14 16" fill="none"><path d="M3 2 L11 8 L3 14 Z" fill="#b3b3b3"/></svg>
<div class="t" style="left:3053.5px;top:1239.6px;font-size:23.5px;color:#1e1e1e;">Heading</div>
<svg style="position:absolute;left:3014px;top:1298.7px;" width="14" height="16" viewBox="0 0 14 16" fill="none"><path d="M3 2 L11 8 L3 14 Z" fill="#b3b3b3"/></svg>
<div class="t" style="left:3053.5px;top:1307.6px;font-size:23.5px;color:#1e1e1e;">Display</div>
<svg style="position:absolute;left:3014px;top:1366.7px;" width="14" height="16" viewBox="0 0 14 16" fill="none"><path d="M3 2 L11 8 L3 14 Z" fill="#b3b3b3"/></svg>
<div class="t" style="left:3053.5px;top:1375.6px;font-size:23.5px;color:#1e1e1e;">Button</div>
<svg style="position:absolute;left:3014px;top:1434.7px;" width="14" height="16" viewBox="0 0 14 16" fill="none"><path d="M3 2 L11 8 L3 14 Z" fill="#b3b3b3"/></svg>
<div class="t" style="left:3053.5px;top:1443.6px;font-size:23.5px;color:#1e1e1e;">Utility</div>
<div class="t" style="left:3003.5px;top:1541.0px;font-size:24.6px;color:#8c8c8c;">Effect styles</div>
<svg style="position:absolute;left:3005px;top:1591.8px;" width="34" height="36" viewBox="0 0 34 36" fill="none"><circle cx="17" cy="15.9" r="12.4" stroke="#1a1a1a" stroke-width="1.9"/><path d="M2.5 27 A18.5 18.5 0 0 0 31.5 27" stroke="#1a1a1a" stroke-width="1.9"/></svg>
<div class="t" style="left:3054.0px;top:1607.7px;font-size:23.5px;color:#1e1e1e;">Elevation-1</div>
<svg style="position:absolute;left:3005px;top:1659.7px;" width="34" height="36" viewBox="0 0 34 36" fill="none"><circle cx="17" cy="15.9" r="12.4" stroke="#1a1a1a" stroke-width="1.9"/><path d="M2.5 27 A18.5 18.5 0 0 0 31.5 27" stroke="#1a1a1a" stroke-width="1.9"/></svg>
<div class="t" style="left:3054.0px;top:1675.6px;font-size:23.5px;color:#1e1e1e;">Elevation-2</div>
<div class="t" style="left:3054.0px;top:1743.5px;font-size:23.5px;color:#1e1e1e;">Elevation-2-all</div>
<svg style="position:absolute;left:3005px;top:1795.5px;" width="34" height="36" viewBox="0 0 34 36" fill="none"><circle cx="17" cy="15.9" r="12.4" stroke="#1a1a1a" stroke-width="1.9"/><path d="M2.5 27 A18.5 18.5 0 0 0 31.5 27" stroke="#1a1a1a" stroke-width="1.9"/></svg>
<div class="t" style="left:3054.0px;top:1811.4px;font-size:23.5px;color:#1e1e1e;">Elevation-3</div>
<div style="position:absolute;left:3356px;top:1786px;width:64px;height:64px;background:#1e1e1e;border-radius:50%"></div>
<svg style="position:absolute;left:3376px;top:1800px;" width="26" height="36" viewBox="0 0 26 36" fill="none"><path d="M5.3 11.5 A7.4 7.4 0 1 1 18.6 15.8 Q14 20 13.3 23.5" stroke="#fff" stroke-width="2" stroke-linecap="round"/><rect x="11.8" y="29.6" width="2.8" height="2.8" fill="#fff"/></svg>
<div style="position:absolute;left:0px;top:1796px;width:3444px;height:60px;background:linear-gradient(rgba(0,0,0,0) 0%,rgba(0,0,0,0.015) 45%,rgba(0,0,0,0.06) 100%);-webkit-mask-image:linear-gradient(to right,transparent 0,#000 500px);pointer-events:none"></div>
</body></html>
